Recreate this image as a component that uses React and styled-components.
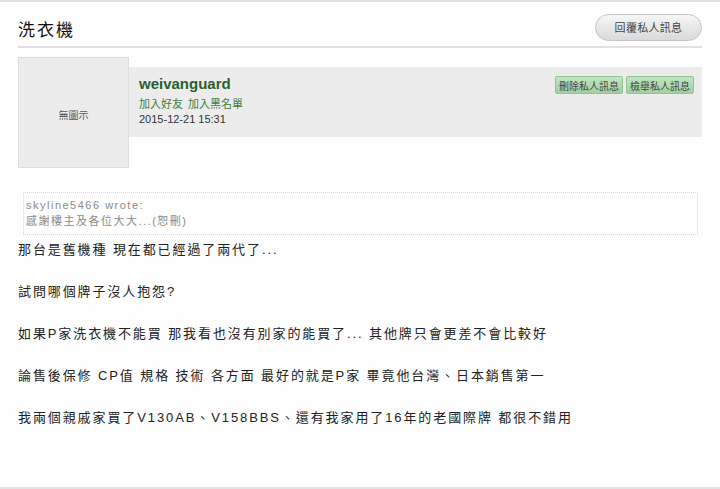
import React from 'react'
import styled, { createGlobalStyle } from 'styled-components'

const GlobalStyle = createGlobalStyle`
  html, body {
    margin: 0;
    padding: 0;
    background: #fdfefd;
  }
  body {
    font-family: "Liberation Sans", "Noto Sans CJK TC", sans-serif;
    color: #222;
  }
`

const paragraphs = [
  '那台是舊機種 現在都已經過了兩代了...',
  '試問哪個牌子沒人抱怨?',
  '如果P家洗衣機不能買 那我看也沒有別家的能買了... 其他牌只會更差不會比較好',
  '論售後保修 CP值 規格 技術 各方面 最好的就是P家 畢竟他台灣、日本銷售第一',
  '我兩個親戚家買了V130AB、V158BBS、還有我家用了16年的老國際牌 都很不錯用',
]

function App() {
  return (
    <Page>
      <GlobalStyle />
      <Header>
        <Title>洗衣機</Title>
        <ReplyButton>回覆私人訊息</ReplyButton>
      </Header>

      <Post>
        <Avatar>無圖示</Avatar>
        <InfoPanel>
          <UserBlock>
            <UserName>weivanguard</UserName>
            <Links>
              <LinkText>加入好友</LinkText>
              <LinkText>加入黑名單</LinkText>
            </Links>
            <DateText>2015-12-21 15:31</DateText>
          </UserBlock>
          <Actions>
            <GreenButton>刪除私人訊息</GreenButton>
            <GreenButton>檢舉私人訊息</GreenButton>
          </Actions>
        </InfoPanel>
      </Post>

      <Quote>
        <QuoteLine>skyline5466 wrote:</QuoteLine>
        <QuoteLine>感謝樓主及各位大大...(恕刪)</QuoteLine>
      </Quote>

      <Body>
        {paragraphs.map((p, i) => (
          <Para key={i}>{p}</Para>
        ))}
      </Body>
    </Page>
  )
}

export default App

const Page = styled.div`
  box-sizing: border-box;
  height: 100vh;
  padding: 0 18px;
  border-top: 2px solid #e2e3e2;
  border-bottom: 2px solid #e2e3e2;
  display: flex;
  flex-direction: column;
`

const Header = styled.div`
  height: 44px;
  display: flex;
  align-items: center;
  justify-content: space-between;
  border-bottom: 2px solid #e1e2e1;
`

const Title = styled.h1`
  margin: 0;
  padding-top: 8px;
  font-size: 17px;
  font-weight: normal;
  letter-spacing: 2px;
  color: #111;
  font-family: "Noto Sans CJK TC", serif;
`

const ReplyButton = styled.div`
  box-sizing: border-box;
  width: 107px;
  height: 27px;
  margin-top: 6px;
  border: 1px solid #c4c4c4;
  border-radius: 14px;
  background: linear-gradient(#f6f6f6, #d9d9d9);
  display: flex;
  align-items: center;
  justify-content: center;
  font-size: 11px;
  letter-spacing: 0.3px;
  color: #444;
`

const Post = styled.div`
  display: flex;
  margin-top: 9px;
`

const Avatar = styled.div`
  box-sizing: border-box;
  width: 111px;
  height: 111px;
  flex: none;
  padding-top: 4px;
  background: #ececec;
  border: 1px solid #dedede;
  display: flex;
  align-items: center;
  justify-content: center;
  font-size: 10px;
  color: #555;
`

const InfoPanel = styled.div`
  box-sizing: border-box;
  flex: 1;
  height: 70px;
  margin-top: 10px;
  padding: 8px 8px 0 10px;
  background: #ececec;
  display: flex;
  justify-content: space-between;
  align-items: flex-start;
`

const UserBlock = styled.div`
  display: flex;
  flex-direction: column;
`

const UserName = styled.div`
  font-size: 15px;
  line-height: 18px;
  font-weight: bold;
  color: #2b5f2c;
`

const Links = styled.div`
  display: flex;
  gap: 5px;
  margin-top: 4px;
`

const LinkText = styled.span`
  font-size: 11px;
  line-height: 15px;
  color: #3f7e3f;
`

const DateText = styled.div`
  font-size: 11px;
  line-height: 15px;
  color: #333;
`

const Actions = styled.div`
  display: flex;
  gap: 3px;
  margin-top: 1px;
`

const GreenButton = styled.div`
  box-sizing: border-box;
  width: 68px;
  height: 18px;
  border: 1px solid #93c293;
  border-radius: 2px;
  background: linear-gradient(#c2e5c2, #9fd09f);
  display: flex;
  align-items: center;
  justify-content: center;
  font-size: 10px;
  color: #444;
`

const Quote = styled.div`
  box-sizing: border-box;
  margin: 24px 4px 0 5px;
  height: 43px;
  padding: 4px 2px;
  border: 1px dotted #d6d6d6;
`

const QuoteLine = styled.div`
  font-size: 11px;
  line-height: 16px;
  letter-spacing: 1.5px;
  color: #8a8a8a;
`

const Body = styled.div`
  margin-top: 4px;
`

const Para = styled.p`
  margin: 0 0 21px;
  font-size: 13px;
  line-height: 21px;
  letter-spacing: 1.9px;
  color: #222;
`
